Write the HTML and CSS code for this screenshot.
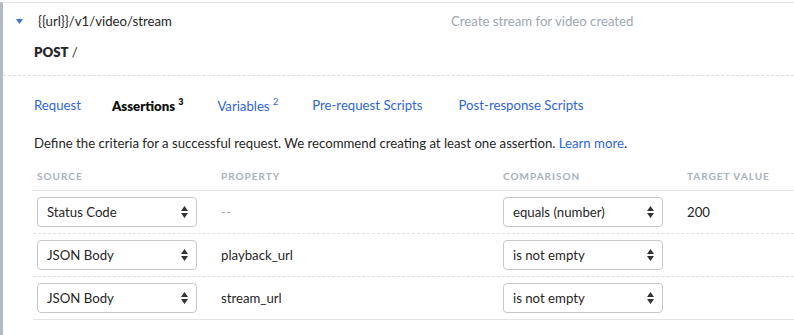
FILE: index.html
```html
<!DOCTYPE html>
<html lang="en">
<head>
    <meta charset="UTF-8">
    <meta name="viewport" content="width=device-width, initial-scale=1.0">
    <title>Assertions</title>
    <link rel="stylesheet" href="styles.css">
</head>
<body>
    <div class="request-card">
        <div class="request-head">
            <div class="head-line">
                <svg class="caret" width="7" height="5" viewBox="0 0 7 5"><path d="M0 0 H7 L3.5 5 Z" fill="#3573d6"/></svg>
                <span class="url">{{url}}/v1/video/stream</span>
                <span class="desc">Create stream for video created</span>
            </div>
            <div class="method"><b>POST</b> /</div>
        </div>
        <div class="request-body">
            <div class="tabs">
                <a class="tab">Request</a>
                <a class="tab active">Assertions <sup>3</sup></a>
                <a class="tab">Variables <sup>2</sup></a>
                <a class="tab">Pre-request Scripts</a>
                <a class="tab">Post-response Scripts</a>
            </div>
            <p class="hint">Define the criteria for a successful request. We recommend creating at least one assertion. <a>Learn more</a>.</p>
            <div class="assert-table">
                <div class="row head">
                    <div>Source</div>
                    <div>Property</div>
                    <div>Comparison</div>
                    <div>Target value</div>
                </div>
                <div class="row">
                    <div><div class="select">Status Code<svg class="arrows" width="7" height="12" viewBox="0 0 7 12"><path d="M0 5 L3.5 0 L7 5 Z M0 7 H7 L3.5 12 Z" fill="#333"/></svg></div></div>
                    <div class="muted">--</div>
                    <div><div class="select">equals (number)<svg class="arrows" width="7" height="12" viewBox="0 0 7 12"><path d="M0 5 L3.5 0 L7 5 Z M0 7 H7 L3.5 12 Z" fill="#333"/></svg></div></div>
                    <div>200</div>
                </div>
                <div class="row">
                    <div><div class="select">JSON Body<svg class="arrows" width="7" height="12" viewBox="0 0 7 12"><path d="M0 5 L3.5 0 L7 5 Z M0 7 H7 L3.5 12 Z" fill="#333"/></svg></div></div>
                    <div>playback_url</div>
                    <div><div class="select">is not empty<svg class="arrows" width="7" height="12" viewBox="0 0 7 12"><path d="M0 5 L3.5 0 L7 5 Z M0 7 H7 L3.5 12 Z" fill="#333"/></svg></div></div>
                    <div></div>
                </div>
                <div class="row last">
                    <div><div class="select">JSON Body<svg class="arrows" width="7" height="12" viewBox="0 0 7 12"><path d="M0 5 L3.5 0 L7 5 Z M0 7 H7 L3.5 12 Z" fill="#333"/></svg></div></div>
                    <div>stream_url</div>
                    <div><div class="select">is not empty<svg class="arrows" width="7" height="12" viewBox="0 0 7 12"><path d="M0 5 L3.5 0 L7 5 Z M0 7 H7 L3.5 12 Z" fill="#333"/></svg></div></div>
                    <div></div>
                </div>
            </div>
            <a class="add-link">+ Add assertion</a>
        </div>
    </div>
</body>
</html>
```

FILE: styles.css
```css
body {
    margin: 0;
    font-family: Lato, "Open Sans", sans-serif;
    font-size: 13.2px;
    color: #262626;
    background-color: #fff;
    overflow: hidden;
}

a {
    color: #2f66d6;
    cursor: pointer;
}

.request-card {
    margin-top: 2px;
    border-top: 1px solid #e3e3e3;
    border-left: 3px solid #b3bac1;
    height: 340px;
}

.request-head {
    padding: 9px 0 0 0;
    height: 63px;
    border-bottom: 1px dashed #dcdcdc;
}

.head-line {
    display: flex;
    align-items: center;
    height: 18px;
}

.caret {
    margin-left: 13px;
    margin-right: 15px;
}

.url {
    width: 413px;
}

.desc {
    color: #9ea8b2;
}

.method {
    margin-top: 13px;
    padding-left: 31px;
    height: 18px;
    line-height: 18px;
}

.method b {
    font-weight: 800;
}

.request-body {
    padding-left: 30px;
}

.tabs {
    display: flex;
    margin-top: 19px;
    height: 20px;
    align-items: center;
}

.tab {
    color: #2f66d6;
    margin-right: 34px;
}

.tab:first-child {
    margin-left: 1px;
    margin-right: 31px;
}

.tab sup {
    font-size: 9px;
    vertical-align: 6px;
}

.tab.active {
    color: #111;
    font-weight: 800;
}

.tab:nth-child(4) {
    margin-right: 36px;
}

.hint {
    margin: 18px 0 0 1px;
    line-height: 20px;
}

.assert-table {
    margin-top: 17px;
}

.row {
    display: grid;
    grid-template-columns: 184px 282px 184px 1fr;
    align-items: center;
    height: 42px;
    border-bottom: 1px dashed #e0e0e0;
}

.row > div {
    padding-left: 4px;
}

.row.head {
    height: 20px;
    border-bottom: 1px solid #e3e3e3;
    align-items: start;
    font-size: 10px;
    font-weight: 700;
    letter-spacing: 1px;
    text-transform: uppercase;
    color: #a9b1b9;
}

.row.last {
    border-bottom: 1px solid #e3e3e3;
}

.select {
    display: flex;
    align-items: center;
    justify-content: space-between;
    box-sizing: border-box;
    width: 160px;
    height: 30px;
    padding: 0 8px 0 9px;
    border: 1px solid #c8c8c8;
    border-radius: 4px;
}

.muted {
    color: #aaa;
}

.add-link {
    display: block;
    margin: 12px 0 0 4px;
}
```
